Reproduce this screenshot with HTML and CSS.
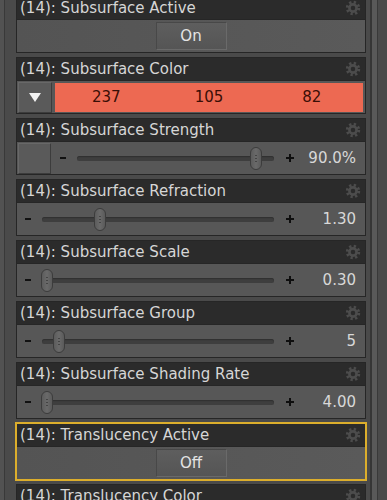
FILE: index.html
```html
<!DOCTYPE html>
<html lang="en">
<head>
  <meta charset="UTF-8" />
  <meta name="viewport" content="width=device-width, initial-scale=1.0"/>
  <title>Surface Properties</title>
  <link rel="stylesheet" href="styles.css">
</head>
<body>
  <div class="frame">
    <div class="rail-left"></div>

    <div class="list">
      <!-- Subsurface Active -->
      <div class="prop">
        <div class="prop-head">
          <span>(14): Subsurface Active</span>
          <svg class="gear" viewBox="0 0 16 16"><circle cx="8" cy="8" r="5.6" fill="none" stroke="#4c4c4c" stroke-width="3.2" stroke-dasharray="2.2 2.2"/><circle cx="8" cy="8" r="3.6" fill="none" stroke="#4c4c4c" stroke-width="2.6"/></svg>
        </div>
        <div class="prop-body toggle">
          <button class="switch">On</button>
        </div>
      </div>

      <!-- Subsurface Color -->
      <div class="prop">
        <div class="prop-head">
          <span>(14): Subsurface Color</span>
          <svg class="gear" viewBox="0 0 16 16"><circle cx="8" cy="8" r="5.6" fill="none" stroke="#4c4c4c" stroke-width="3.2" stroke-dasharray="2.2 2.2"/><circle cx="8" cy="8" r="3.6" fill="none" stroke="#4c4c4c" stroke-width="2.6"/></svg>
        </div>
        <div class="prop-body">
          <button class="side-btn"><span class="tri"></span></button>
          <div class="swatch">
            <span>237</span>
            <span>105</span>
            <span>82</span>
          </div>
        </div>
      </div>

      <!-- Subsurface Strength -->
      <div class="prop">
        <div class="prop-head">
          <span>(14): Subsurface Strength</span>
          <svg class="gear" viewBox="0 0 16 16"><circle cx="8" cy="8" r="5.6" fill="none" stroke="#4c4c4c" stroke-width="3.2" stroke-dasharray="2.2 2.2"/><circle cx="8" cy="8" r="3.6" fill="none" stroke="#4c4c4c" stroke-width="2.6"/></svg>
        </div>
        <div class="prop-body slider">
          <button class="side-btn"></button>
          <span class="minus"></span>
          <div class="track"><span class="thumb" style="left: 91%"></span></div>
          <span class="plus"></span>
          <span class="value">90.0%</span>
        </div>
      </div>

      <!-- Subsurface Refraction -->
      <div class="prop">
        <div class="prop-head">
          <span>(14): Subsurface Refraction</span>
          <svg class="gear" viewBox="0 0 16 16"><circle cx="8" cy="8" r="5.6" fill="none" stroke="#4c4c4c" stroke-width="3.2" stroke-dasharray="2.2 2.2"/><circle cx="8" cy="8" r="3.6" fill="none" stroke="#4c4c4c" stroke-width="2.6"/></svg>
        </div>
        <div class="prop-body slider">
          <span class="minus"></span>
          <div class="track"><span class="thumb" style="left: 25%"></span></div>
          <span class="plus"></span>
          <span class="value">1.30</span>
        </div>
      </div>

      <!-- Subsurface Scale -->
      <div class="prop">
        <div class="prop-head">
          <span>(14): Subsurface Scale</span>
          <svg class="gear" viewBox="0 0 16 16"><circle cx="8" cy="8" r="5.6" fill="none" stroke="#4c4c4c" stroke-width="3.2" stroke-dasharray="2.2 2.2"/><circle cx="8" cy="8" r="3.6" fill="none" stroke="#4c4c4c" stroke-width="2.6"/></svg>
        </div>
        <div class="prop-body slider">
          <span class="minus"></span>
          <div class="track"><span class="thumb" style="left: 2%"></span></div>
          <span class="plus"></span>
          <span class="value">0.30</span>
        </div>
      </div>

      <!-- Subsurface Group -->
      <div class="prop">
        <div class="prop-head">
          <span>(14): Subsurface Group</span>
          <svg class="gear" viewBox="0 0 16 16"><circle cx="8" cy="8" r="5.6" fill="none" stroke="#4c4c4c" stroke-width="3.2" stroke-dasharray="2.2 2.2"/><circle cx="8" cy="8" r="3.6" fill="none" stroke="#4c4c4c" stroke-width="2.6"/></svg>
        </div>
        <div class="prop-body slider">
          <span class="minus"></span>
          <div class="track"><span class="thumb" style="left: 7.5%"></span></div>
          <span class="plus"></span>
          <span class="value">5</span>
        </div>
      </div>

      <!-- Subsurface Shading Rate -->
      <div class="prop">
        <div class="prop-head">
          <span>(14): Subsurface Shading Rate</span>
          <svg class="gear" viewBox="0 0 16 16"><circle cx="8" cy="8" r="5.6" fill="none" stroke="#4c4c4c" stroke-width="3.2" stroke-dasharray="2.2 2.2"/><circle cx="8" cy="8" r="3.6" fill="none" stroke="#4c4c4c" stroke-width="2.6"/></svg>
        </div>
        <div class="prop-body slider">
          <span class="minus"></span>
          <div class="track"><span class="thumb" style="left: 2%"></span></div>
          <span class="plus"></span>
          <span class="value">4.00</span>
        </div>
      </div>

      <!-- Translucency Active (selected) -->
      <div class="prop selected">
        <div class="prop-head">
          <span>(14): Translucency Active</span>
          <svg class="gear" viewBox="0 0 16 16"><circle cx="8" cy="8" r="5.6" fill="none" stroke="#4c4c4c" stroke-width="3.2" stroke-dasharray="2.2 2.2"/><circle cx="8" cy="8" r="3.6" fill="none" stroke="#4c4c4c" stroke-width="2.6"/></svg>
        </div>
        <div class="prop-body toggle">
          <button class="switch">Off</button>
        </div>
      </div>

      <!-- Translucency Color -->
      <div class="prop">
        <div class="prop-head">
          <span>(14): Translucency Color</span>
          <svg class="gear" viewBox="0 0 16 16"><circle cx="8" cy="8" r="5.6" fill="none" stroke="#4c4c4c" stroke-width="3.2" stroke-dasharray="2.2 2.2"/><circle cx="8" cy="8" r="3.6" fill="none" stroke="#4c4c4c" stroke-width="2.6"/></svg>
        </div>
        <div class="prop-body"></div>
      </div>
    </div>

    <div class="rail-right"><div class="rail-bar"></div></div>
  </div>
</body>
</html>
```

FILE: styles.css
```css
* {
  box-sizing: border-box;
}

body {
  margin: 0;
  background: #4a4a4a;
  font-family: 'DejaVu Sans', sans-serif;
  font-size: 15px;
  color: #d6d6d6;
}

.frame {
  display: flex;
  height: 500px;
  overflow: hidden;
}

.rail-left {
  width: 5px;
  flex-shrink: 0;
  background: #525252;
  border-right: 1px solid #393939;
  margin-right: 11px;
}

.rail-right {
  display: flex;
  width: 17px;
  flex-shrink: 0;
  margin-left: 4px;
  border-left: 2px solid #363636;
}

.rail-bar {
  width: 6px;
  background: #595959;
  border-right: 1px solid #393939;
}

.list {
  flex: 1;
  margin-top: -4px;
}

.prop {
  border: 1px solid #262626;
  margin-bottom: 4px;
}

.prop.selected {
  border-color: #dcae2c;
  box-shadow: 0 0 0 1px #dcae2c;
}

.prop-head {
  display: flex;
  align-items: center;
  justify-content: space-between;
  height: 22px;
  padding: 0 4px 0 3px;
  background: #2b2b2b;
  white-space: nowrap;
}

.gear {
  width: 16px;
  height: 16px;
}

.prop-body {
  display: flex;
  align-items: center;
  height: 33px;
  padding: 0 1px;
  border-top: 1px solid #262626;
  background: #575757;
}

/* on / off switch */
.toggle {
  justify-content: center;
  background: linear-gradient(to right, #545454, #5a5a5a);
}

.switch {
  width: 71px;
  height: 28px;
  font-family: inherit;
  font-size: 15px;
  color: #e4e4e4;
  background: linear-gradient(#5e5e5e, #555555);
  border: 1px solid #484848;
  border-right-color: #6a6a6a;
  border-bottom-color: #6a6a6a;
  padding: 0;
}

/* small square button at row start */
.side-btn {
  display: flex;
  align-items: center;
  justify-content: center;
  width: 34px;
  height: 31px;
  padding: 0;
  background: #5a5a5a;
  border: 1px solid #3c3c3c;
  border-top-color: #686868;
  border-left-color: #686868;
}

.tri {
  width: 0;
  height: 0;
  border-left: 6px solid transparent;
  border-right: 6px solid transparent;
  border-top: 9px solid #f2f2f2;
}

.swatch {
  flex: 1;
  display: flex;
  height: 29px;
  margin: 0 1px 0 3px;
  background: #ed6952;
  color: #3a0e06;
}

.swatch span {
  flex: 1;
  text-align: center;
  line-height: 29px;
}

/* slider rows */
.slider {
  padding: 0 9px 0 8px;
}

.slider .side-btn {
  margin: 0 9px 0 -7px;
  width: 33px;
}

.minus {
  width: 6px;
  height: 2px;
  background: #111;
  flex-shrink: 0;
}

.track {
  position: relative;
  flex: 1;
  height: 5px;
  margin: 0 12px 0 11px;
  border-radius: 3px;
  background: #3e3e3e;
  box-shadow: inset 0 1px 1px #303030;
}

.thumb {
  position: absolute;
  top: -9px;
  width: 12px;
  height: 23px;
  margin-left: -6px;
  border-radius: 6px;
  border: 1px solid #3c3c3c;
  background: linear-gradient(to right, #5c5c5c, #6a6a6a, #5a5a5a);
}

.thumb::after {
  content: '';
  position: absolute;
  left: 4px;
  top: 6px;
  width: 2px;
  height: 9px;
  background: radial-gradient(circle, #444 45%, transparent 55%) 0 0 / 2px 3px;
}

.plus {
  position: relative;
  width: 8px;
  height: 8px;
  flex-shrink: 0;
}

.plus::before,
.plus::after {
  content: '';
  position: absolute;
  background: #0e0e0e;
}

.plus::before {
  left: 0;
  top: 3px;
  width: 8px;
  height: 2px;
}

.plus::after {
  left: 3px;
  top: 0;
  width: 2px;
  height: 8px;
}

.value {
  width: 62px;
  text-align: right;
  flex-shrink: 0;
  color: #d8d8d8;
}
```
